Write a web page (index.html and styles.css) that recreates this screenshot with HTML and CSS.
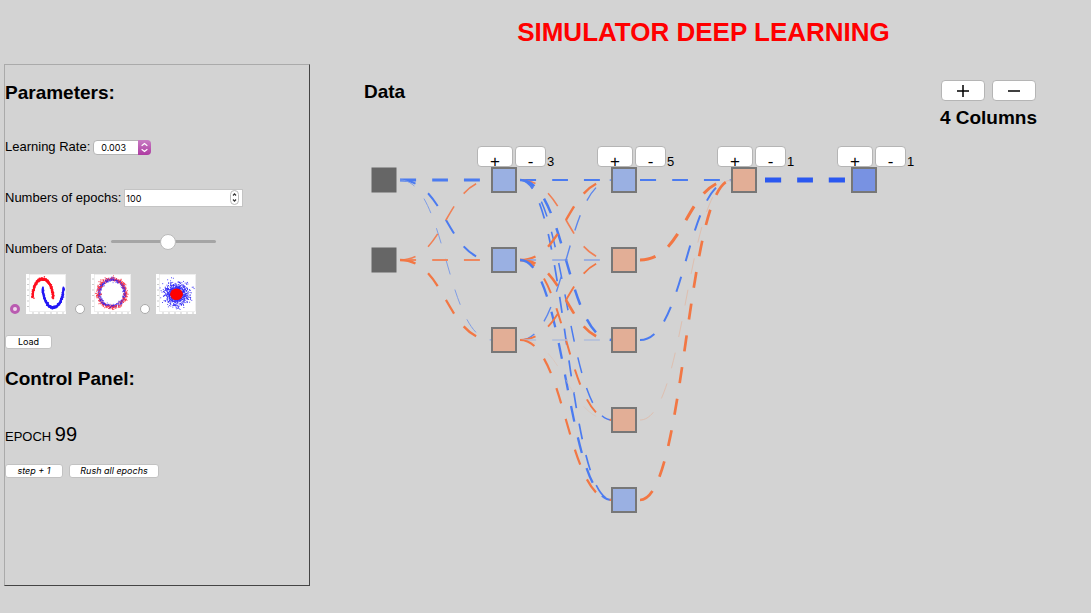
FILE: index.html
```html
<!DOCTYPE html>
<html lang="en">
<head>
<meta charset="utf-8">
<title>Simulator Deep Learning</title>
<link rel="stylesheet" href="styles.css">
</head>
<body>
<div class="app">
  <aside class="sidebar">
    <h2 class="heading">Parameters:</h2>
    <div class="row rate-row">
      <label for="rate">Learning Rate:</label>
      <span class="select-wrap">
        <select id="rate" class="rate"><option>0.003</option><option>0.01</option><option>0.03</option></select>
        <svg class="select-arrows" viewBox="0 0 13 15" aria-hidden="true"><path d="M4 5.5 6.5 3.5 9 5.5M4 9.5 6.5 11.5 9 9.5"/></svg>
      </span>
    </div>
    <div class="row epochs-row">
      <label for="epochs">Numbers of epochs:</label>
      <span class="number-wrap">
        <input id="epochs" class="epochs" type="number" value="100">
        <svg class="stepper" viewBox="0 0 9 15" aria-hidden="true"><rect x=".5" y=".5" width="8" height="14" rx="4"/><path d="M3 5.5 4.5 3.8 6 5.5M3 9.5 4.5 11.2 6 9.5"/></svg>
      </span>
    </div>
    <div class="row data-row">
      <label for="amount">Numbers of Data:</label>
      <input id="amount" class="slider" type="range" min="0" max="100" value="55">
    </div>
    <div class="datasets">
      <label class="dataset"><input type="radio" name="dataset" aria-label="Moons" checked><svg class="plot" data-kind="moons" viewBox="0 0 40 40"></svg></label>
      <label class="dataset"><input type="radio" name="dataset" aria-label="Circles"><svg class="plot" data-kind="circles" viewBox="0 0 40 40"></svg></label>
      <label class="dataset"><input type="radio" name="dataset" aria-label="Gaussian"><svg class="plot" data-kind="gauss" viewBox="0 0 40 40"></svg></label>
    </div>
    <button class="btn load" type="button">Load</button>
    <h2 class="heading control-heading">Control Panel:</h2>
    <p class="epoch">EPOCH <span class="epoch-value">99</span></p>
    <div class="actions">
      <button class="btn step" type="button">step + 1</button>
      <button class="btn rush" type="button">Rush all epochs</button>
    </div>
  </aside>
  <main class="main">
    <h1 class="title">SIMULATOR DEEP LEARNING</h1>
    <div class="toolbar">
      <h2 class="heading data-heading">Data</h2>
      <div class="columns">
        <div class="column-buttons">
          <button class="btn wide" type="button" aria-label="Add column"><svg viewBox="0 0 12 12" class="sign"><path d="M0 6H12M6 0V12"/></svg></button>
          <button class="btn wide" type="button" aria-label="Remove column"><svg viewBox="0 0 12 12" class="sign"><path d="M0 6H12"/></svg></button>
        </div>
        <p class="heading">4 Columns</p>
      </div>
    </div>
    <div class="network">
      <svg class="graph" viewBox="0 0 560 380" width="560" height="380"></svg>
      <div class="layer layer-1"><button class="btn add" type="button">+</button><button class="btn remove" type="button">-</button><span>3</span></div>
      <div class="layer layer-2"><button class="btn add" type="button">+</button><button class="btn remove" type="button">-</button><span>5</span></div>
      <div class="layer layer-3"><button class="btn add" type="button">+</button><button class="btn remove" type="button">-</button><span>1</span></div>
      <div class="layer layer-4"><button class="btn add" type="button">+</button><button class="btn remove" type="button">-</button><span>1</span></div>
    </div>
  </main>
</div>
<script src="app.js"></script>
</body>
</html>
```
FILE: styles.css
```css
* { box-sizing: border-box; }
body {
  margin: 0;
  background: #d3d3d3;
  color: #000;
  font: 13px/20px "Liberation Sans", Arial, sans-serif;
}
h1, h2, p { margin: 0; }
.app {
  display: grid;
  grid-template-columns: 28.15% 1fr;
  gap: 6px;
  padding-left: 4px;
}
.sidebar {
  display: flex;
  flex-direction: column;
  align-items: flex-start;
  margin-top: 64px;
  padding: 17px 0 107px;
  border: 1px solid;
  border-color: #aaa #444 #444 #aaa;
}
.heading { font-size: 19px; line-height: 22px; font-weight: bold; }
.row { display: flex; align-items: center; gap: 3px; height: 20px; }
.rate-row { margin-top: 33px; }
.epochs-row { margin-top: 31px; }
.data-row { margin-top: 31px; }
.select-wrap, .number-wrap { position: relative; display: flex; }
.rate {
  appearance: none;
  width: 58px;
  height: 15px;
  padding: 0 0 0 7px;
  border: 1px solid #b5b5b5;
  border-radius: 4px;
  background: #fff;
  color: #000;
  font: 9px/13px Inter, sans-serif;
}
.select-arrows {
  position: absolute;
  right: 0;
  top: 0;
  width: 13px;
  height: 15px;
  border-radius: 0 4px 4px 0;
  background: linear-gradient(#c87cc3, #ae3ba2);
  pointer-events: none;
}
.select-arrows path { fill: none; stroke: #fff; stroke-width: 1.2; stroke-linecap: round; }
.epochs {
  appearance: textfield;
  width: 119px;
  height: 18px;
  padding: 0 1px;
  border: 1px solid #c4c4c4;
  border-radius: 0;
  background: #fff;
  color: #000;
  font: 9px/16px Inter, sans-serif;
}
.epochs::-webkit-inner-spin-button { display: none; }
.stepper { position: absolute; right: 4px; top: 1px; width: 9px; height: 15px; }
.stepper rect { fill: #fff; stroke: #bbb; }
.stepper path { fill: none; stroke: #333; stroke-width: 1.2; }
.slider {
  appearance: none;
  align-self: flex-start;
  width: 105px;
  height: 16px;
  margin: -6px 0 0 1px;
  background: transparent;
}
.slider::-webkit-slider-runnable-track { height: 3px; border-radius: 2px; background: #a5a5a5; }
.slider::-webkit-slider-thumb {
  appearance: none;
  width: 16px;
  height: 16px;
  margin-top: -6px;
  border: 1px solid #bbb;
  border-radius: 50%;
  background: #fff;
}
.datasets { display: flex; gap: 9px; margin-top: 15px; padding-left: 5px; }
.dataset { display: flex; align-items: flex-end; width: 56px; }
.dataset input {
  appearance: none;
  flex: none;
  width: 10px;
  height: 10px;
  margin: 0;
  border: 1px solid #aaa;
  border-radius: 50%;
  background: #fff;
}
.dataset input:checked { border: 3px solid #b95bb0; background: #eed8ec; }
.plot { flex: none; width: 40px; height: 40px; margin-left: auto; background: #fff; }
.btn {
  display: flex;
  align-items: center;
  justify-content: center;
  height: 14px;
  padding: 0;
  border: 1px solid #c2c2c2;
  border-radius: 3px;
  background: #fff;
  color: #000;
  font: 9px/12px Inter, sans-serif;
}
.load { width: 47px; margin-top: 21px; }
.control-heading { margin-top: 19px; }
.epoch { margin-top: 32px; line-height: 24px; }
.epoch-value { font-size: 20px; }
.actions { display: flex; gap: 6px; margin-top: 15px; }
.step, .rush { font-style: italic; }
.step { width: 58px; }
.rush { width: 90px; }
.main { display: flex; flex-direction: column; }
.title {
  margin-top: 17px;
  color: #f00;
  font-size: 26px;
  line-height: 30px;
  text-align: center;
}
.toolbar {
  display: flex;
  justify-content: space-between;
  align-items: flex-start;
  margin-top: 33px;
  padding: 0 54px 0 48px;
}
.data-heading { padding-top: 1px; }
.column-buttons { display: flex; gap: 7px; padding-left: 1px; margin-bottom: 6px; }
.wide { width: 44px; height: 21px; border-color: #b5b5b5; border-radius: 4px; }
.sign { width: 12px; height: 12px; }
.sign path { fill: none; stroke: #000; stroke-width: 1.5; }
.network { position: relative; margin: 17px 0 0 48px; }
.graph { display: block; }
.layer { position: absolute; top: 0; display: flex; gap: 2px; }
.layer-1 { left: 113px; }
.layer-2 { left: 233px; }
.layer-3 { left: 353px; }
.layer-4 { left: 473px; }
.layer .btn {
  height: 21px;
  padding-top: 10px;
  border-color: #b5b5b5;
  border-radius: 4px;
  font: 17px/12px "Liberation Sans", Arial, sans-serif;
}
.layer .add { width: 36px; }
.layer .remove { width: 31px; }
.layer span { padding-top: 6px; margin-left: -1px; }
```
FILE: app.js
```js
const NS = "http://www.w3.org/2000/svg";
function add(parent, tag, attrs) {
  const el = document.createElementNS(NS, tag);
  for (const k in attrs) el.setAttribute(k, attrs[k]);
  parent.appendChild(el);
}

// Links: source column, source row, target row, width, colour.
const BLUE = "#4b7bf0", ORANGE = "#f27744", SOFT = "#7f9de6";
const links = [
  [0, 0, 0, 3, BLUE], [0, 0, 1, 2, BLUE], [0, 0, 2, 1, SOFT],
  [0, 1, 0, 1.6, "#f08055"], [0, 1, 1, 1.8, "#ee875f"], [0, 1, 2, 2.3, ORANGE],
  [1, 0, 0, 1.9, BLUE], [1, 0, 1, 1.6, "#f08055"], [1, 0, 2, 2.5, BLUE], [1, 0, 3, 1.5, BLUE], [1, 0, 4, 1.7, BLUE],
  [1, 1, 0, 2.4, ORANGE], [1, 1, 1, 1.7, "#88a3e4"], [1, 1, 2, 2.6, ORANGE], [1, 1, 3, 2, ORANGE], [1, 1, 4, 2.3, BLUE],
  [1, 2, 0, 1.4, "#5c86ec"], [1, 2, 1, 1.9, ORANGE], [1, 2, 2, 1.7, "#b0bddc"], [1, 2, 3, 0.6, "#dcc1b3"], [1, 2, 4, 2.2, ORANGE],
  [2, 0, 0, 2, BLUE], [2, 1, 0, 3, ORANGE], [2, 2, 0, 2, BLUE], [2, 3, 0, 1, "#debfb0"], [2, 4, 0, 2.7, ORANGE],
  [3, 0, 0, 5, "#2a58f0"]
];
const layers = [
  ["#666", "#666"],
  ["#9ab0e2", "#9ab0e2", "#e2ae96"],
  ["#9ab0e2", "#e2ae96", "#e2ae96", "#e2ae96", "#9ab0e2"],
  ["#e2ae96"],
  ["#7892e2"]
];
const graph = document.querySelector(".graph");
const nodeX = c => 8 + c * 120, rowY = r => 34 + r * 80;
for (const [c, a, b, w, color] of links) {
  const x1 = nodeX(c) + (c === 3 ? 33 : 28), x2 = nodeX(c + 1), m = (x1 + x2) / 2;
  add(graph, "path", {
    d: `M${x1} ${rowY(a)}C${m} ${rowY(a)} ${m} ${rowY(b)} ${x2} ${rowY(b)}`,
    fill: "none", stroke: color, "stroke-width": w, "stroke-dasharray": "16 16"
  });
}
layers.forEach((rows, c) => rows.forEach((fill, r) => add(graph, "rect", {
  x: nodeX(c), y: rowY(r) - 12, width: 24, height: 24, fill,
  stroke: c ? "#777" : "#666", "stroke-width": c ? 2 : 1
})));

// Dataset thumbnails drawn from a repeatable random sequence.
let seed = 7;
const rnd = () => (seed = (seed * 16807) % 2147483647) / 2147483647;
const normal = () => Math.sqrt(-2 * Math.log(rnd())) * Math.cos(2 * Math.PI * rnd());
const RED = "#ff1020", NAVY = "#2418f5";
function dot(svg, x, y, fill, s = 1.3) {
  if (x > 4 && x < 39 && y > 1 && y < 37)
    add(svg, "rect", { x: (x - s / 2).toFixed(2), y: (y - s / 2).toFixed(2), width: s, height: s, fill });
}
const kinds = {
  moons(svg) {
    for (let i = 0; i < 350; i++) {
      const t = Math.PI * i / 349;
      dot(svg, 16.7 - 10.3 * Math.cos(t) + normal() * 0.4, 24 - 19 * Math.sin(t) + normal() * 0.6, RED);
      dot(svg, 27.2 - 10.3 * Math.cos(t) + normal() * 0.4, 14 + 19.5 * Math.sin(t) + normal() * 0.6, NAVY);
    }
  },
  circles(svg) {
    for (let i = 0; i < 420; i++) {
      const t = rnd() * Math.PI * 2, u = rnd() * Math.PI * 2;
      const r = 13.8 + normal() * 1.1, q = 12.6 + normal() * 0.9;
      dot(svg, 21 + r * Math.cos(t), 19 + r * 1.03 * Math.sin(t), "#f8303f", 0.9);
      dot(svg, 21 + q * Math.cos(u), 19 + q * 1.06 * Math.sin(u), "#3420ec", 0.8);
    }
  },
  gauss(svg) {
    for (let i = 0; i < 900; i++)
      dot(svg, 20.5 + normal() * 6, 20 + normal() * 5.4, "#3028f5", 0.9);
    add(svg, "ellipse", { cx: 20.5, cy: 20.3, rx: 6.4, ry: 5.8, fill: "#ff0000" });
  }
};
document.querySelectorAll(".plot").forEach(svg => {
  add(svg, "rect", { x: 3.5, y: 0.5, width: 36, height: 37, fill: "none", stroke: "#ddd", "stroke-width": 0.5 });
  for (let i = 0; i < 6; i++) {
    add(svg, "path", { d: `M1 ${5 + i * 5.5}h2M${6 + i * 6} 39h2`, stroke: "#aaa", "stroke-width": 0.6 });
  }
  kinds[svg.dataset.kind](svg);
});
```
